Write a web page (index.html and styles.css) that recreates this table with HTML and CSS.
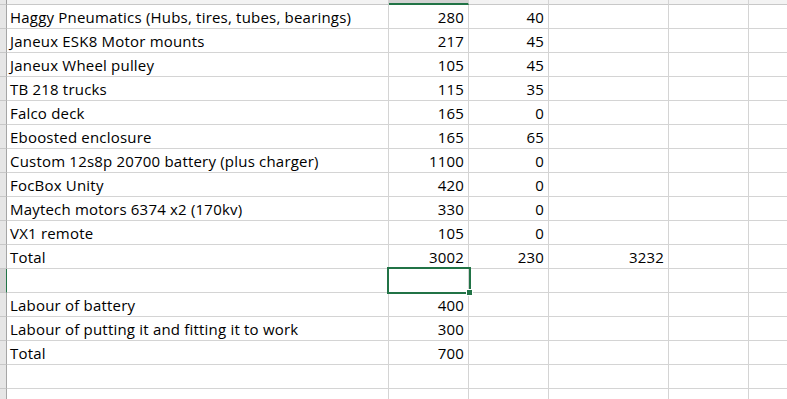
FILE: index.html
```html
<!DOCTYPE html>
<html>
<head>
<meta charset="utf-8">
<link rel="stylesheet" href="styles.css">
</head>
<body>
<div class="sheet">
  <div class="ch rh-corner"></div><div class="ch"></div><div class="ch ch-sel"></div><div class="ch"></div><div class="ch"></div><div class="ch"></div><div class="ch ch-last"></div>

  <div class="rh"></div><div class="c">Haggy Pneumatics (Hubs, tires, tubes, bearings)</div><div class="c n">280</div><div class="c n">40</div><div class="c"></div><div class="c"></div><div class="c last"></div>
  <div class="rh"></div><div class="c">Janeux ESK8 Motor mounts</div><div class="c n">217</div><div class="c n">45</div><div class="c"></div><div class="c"></div><div class="c last"></div>
  <div class="rh"></div><div class="c">Janeux Wheel pulley</div><div class="c n">105</div><div class="c n">45</div><div class="c"></div><div class="c"></div><div class="c last"></div>
  <div class="rh"></div><div class="c">TB 218 trucks</div><div class="c n">115</div><div class="c n">35</div><div class="c"></div><div class="c"></div><div class="c last"></div>
  <div class="rh"></div><div class="c">Falco deck</div><div class="c n">165</div><div class="c n">0</div><div class="c"></div><div class="c"></div><div class="c last"></div>
  <div class="rh"></div><div class="c">Eboosted enclosure</div><div class="c n">165</div><div class="c n">65</div><div class="c"></div><div class="c"></div><div class="c last"></div>
  <div class="rh"></div><div class="c">Custom 12s8p 20700 battery (plus charger)</div><div class="c n">1100</div><div class="c n">0</div><div class="c"></div><div class="c"></div><div class="c last"></div>
  <div class="rh"></div><div class="c">FocBox Unity</div><div class="c n">420</div><div class="c n">0</div><div class="c"></div><div class="c"></div><div class="c last"></div>
  <div class="rh"></div><div class="c">Maytech motors 6374 x2 (170kv)</div><div class="c n">330</div><div class="c n">0</div><div class="c"></div><div class="c"></div><div class="c last"></div>
  <div class="rh"></div><div class="c">VX1 remote</div><div class="c n">105</div><div class="c n">0</div><div class="c"></div><div class="c"></div><div class="c last"></div>
  <div class="rh"></div><div class="c">Total</div><div class="c n">3002</div><div class="c n">230</div><div class="c n">3232</div><div class="c"></div><div class="c last"></div>
  <div class="rh rh-sel"></div><div class="c"></div><div class="c selcell"><div class="sel"><div class="handle"></div></div></div><div class="c"></div><div class="c"></div><div class="c"></div><div class="c last"></div>
  <div class="rh"></div><div class="c">Labour of battery</div><div class="c n">400</div><div class="c"></div><div class="c"></div><div class="c"></div><div class="c last"></div>
  <div class="rh"></div><div class="c">Labour of putting it and fitting it to work</div><div class="c n">300</div><div class="c"></div><div class="c"></div><div class="c"></div><div class="c last"></div>
  <div class="rh"></div><div class="c">Total</div><div class="c n">700</div><div class="c"></div><div class="c"></div><div class="c"></div><div class="c last"></div>
  <div class="rh"></div><div class="c"></div><div class="c"></div><div class="c"></div><div class="c"></div><div class="c"></div><div class="c last"></div>
  <div class="rh"></div><div class="c"></div><div class="c"></div><div class="c"></div><div class="c"></div><div class="c"></div><div class="c last"></div>
</div>
</body>
</html>
```

FILE: styles.css
```css
html, body {
  margin: 0;
  padding: 0;
  background: #ffffff;
  overflow: hidden;
}

.sheet {
  display: grid;
  grid-template-columns: 7px 382px 80px 80px 120px 80px 1fr;
  grid-auto-rows: 24px;
  grid-template-rows: 5px;
  width: 787px;
  font-family: "Open Sans", "Liberation Sans", sans-serif;
  font-size: 15px;
  letter-spacing: 0.2px;
  color: #000000;
}

.ch {
  background: #f3f3f3;
  border-bottom: 1px solid #c8c8c8;
  border-right: 1px solid #d4d4d4;
}
.ch-last { border-right: none; }
.rh-corner {
  background: #e6e6e6;
  border-right: 1px solid #9e9e9e;
}
.ch-sel {
  border-bottom: 2px solid #217346;
  background: #d2d2d2;
}

.rh {
  background: #e6e6e6;
  border-right: 1px solid #a6a6a6;
  border-bottom: 1px solid #c8c8c8;
}
.rh-sel {
  border-right: 1px solid #217346;
  background: #d2d2d2;
}

.c {
  border-right: 1px solid #d4d4d4;
  border-bottom: 1px solid #d4d4d4;
  padding: 0 3px;
  line-height: 20px;
  padding-top: 2px;
  white-space: nowrap;
  overflow: visible;
}
.c.last { border-right: none; }
.n { text-align: right; padding-right: 4px; }

.selcell { position: relative; }
.sel {
  position: absolute;
  left: -2px;
  top: -2px;
  width: 80px;
  height: 23px;
  border: 2px solid #217346;
  z-index: 2;
}
.handle {
  position: absolute;
  right: -4px;
  bottom: -4px;
  width: 5px;
  height: 5px;
  background: #217346;
  border: 1px solid #ffffff;
}
```
